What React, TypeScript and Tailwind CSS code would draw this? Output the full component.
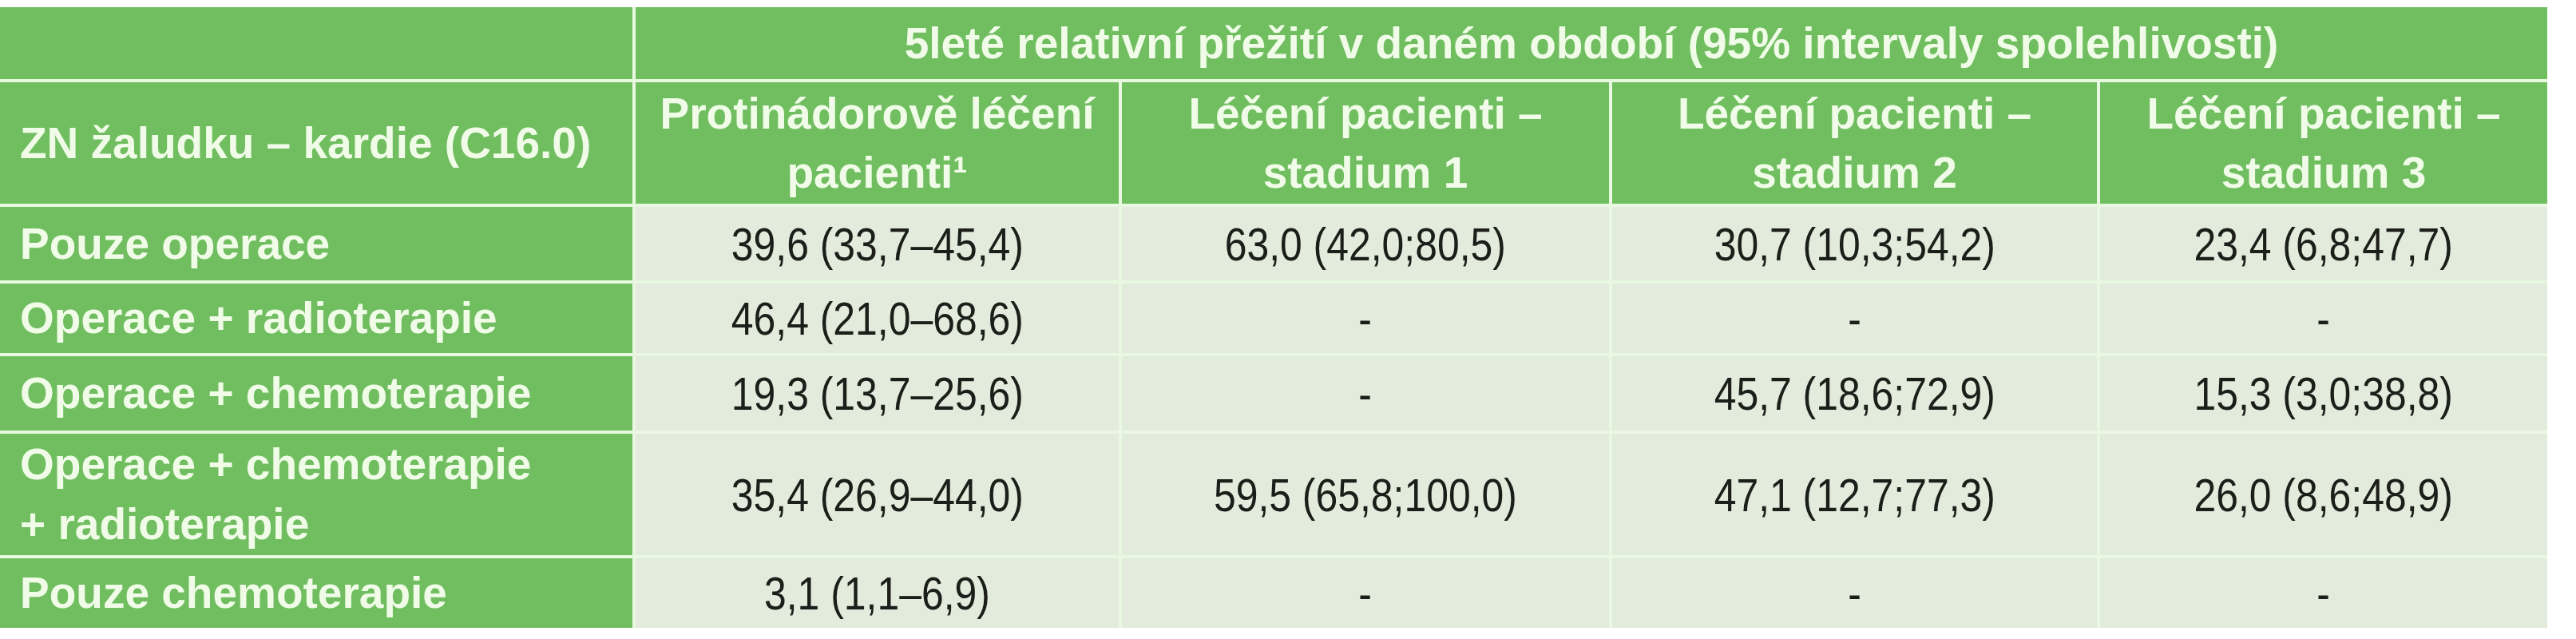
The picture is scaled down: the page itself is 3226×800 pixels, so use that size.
import React from 'react';

const rows = [
    { label: ['Pouze operace'], values: ['39,6 (33,7–45,4)', '63,0 (42,0;80,5)', '30,7 (10,3;54,2)', '23,4 (6,8;47,7)'] },
    { label: ['Operace + radioterapie'], values: ['46,4 (21,0–68,6)', '-', '-', '-'] },
    { label: ['Operace + chemoterapie'], values: ['19,3 (13,7–25,6)', '-', '45,7 (18,6;72,9)', '15,3 (3,0;38,8)'] },
    { label: ['Operace + chemoterapie', '+ radioterapie'], values: ['35,4 (26,9–44,0)', '59,5 (65,8;100,0)', '47,1 (12,7;77,3)', '26,0 (8,6;48,9)'] },
    { label: ['Pouze chemoterapie'], values: ['3,1 (1,1–6,9)', '-', '-', '-'] },
];

const columns = [
    ['Protinádorově léčení', 'pacienti¹'],
    ['Léčení pacienti –', 'stadium 1'],
    ['Léčení pacienti –', 'stadium 2'],
    ['Léčení pacienti –', 'stadium 3'],
];

const bold = "font-['Liberation_Sans',Arial,sans-serif] font-bold text-[55px] text-[#f0fce8]";
const regular = "font-['Liberation_Sans',Arial,sans-serif] text-[58px] text-[#1b1e19]";

export default function App() {
    return (
        <div className="bg-white w-[3226px] h-[800px] pt-[9px]">
            <div className="grid grid-cols-[792px_605px_610px_607px_560px] grid-rows-[90px_152px_92px_87px_93px_152px_87px] gap-[4px] bg-[#e9f8e1] w-[3190px]">
                {/* header row 1 */}
                <div className="bg-[#70be60]" />
                <div className={`col-span-4 bg-[#70be60] flex items-center justify-center ${bold}`}>
                    5leté relativní přežití v daném období (95% intervaly spolehlivosti)
                </div>

                {/* header row 2 */}
                <div className={`bg-[#70be60] flex items-center pl-[25px] ${bold}`}>ZN žaludku – kardie (C16.0)</div>
                {columns.map((col, i) => (
                    <div key={i} className={`bg-[#70be60] flex flex-col items-center justify-center leading-[74px] ${bold}`}>
                        <span>{col[0]}</span>
                        <span>{col[1]}</span>
                    </div>
                ))}

                {/* body */}
                {rows.map((row, i) => (
                    <React.Fragment key={i}>
                        <div className={`bg-[#70be60] flex flex-col justify-center pl-[25px] leading-[75px] ${bold}`}>
                            {row.label.map((l, j) => (
                                <span key={j}>{l}</span>
                            ))}
                        </div>
                        {row.values.map((v, j) => (
                            <div key={j} className={`bg-[#e3ebdc] flex items-center justify-center ${regular}`}>
                                <span className="inline-block whitespace-nowrap scale-x-[0.86]">{v}</span>
                            </div>
                        ))}
                    </React.Fragment>
                ))}
            </div>
        </div>
    );
}
